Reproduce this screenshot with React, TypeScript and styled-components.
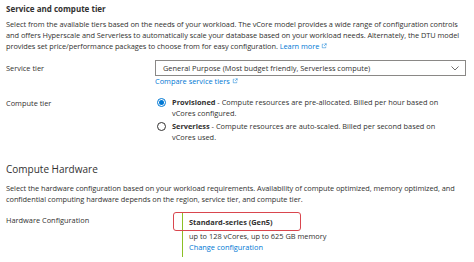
import styled, { createGlobalStyle } from 'styled-components';

const GlobalStyle = createGlobalStyle`
  html, body {
    margin: 0;
    padding: 0;
    background: #ffffff;
  }
  body {
    font-family: 'Open Sans', 'Noto Sans', sans-serif;
    color: #323130;
  }
`;

const Page = styled.div`
  width: 474px;
  height: 262px;
  overflow: hidden;
  padding: 3px 8px 0 6px;
  box-sizing: border-box;
  font-size: 7.4px;
  line-height: 11px;
`;

const SectionTitle = styled.div<{ strong?: boolean }>`
  font-size: ${({ strong }) => (strong ? '8px' : '10px')};
  font-weight: ${({ strong }) => (strong ? 700 : 400)};
  line-height: ${({ strong }) => (strong ? '11px' : '14px')};
  color: #323130;
`;

const Description = styled.p<{ gap: number }>`
  margin: ${({ gap }) => gap}px 0 0 0;
  letter-spacing: -0.05px;
  white-space: nowrap;
`;

const Link = styled.a`
  color: #0078d4;
  text-decoration: none;
`;

const External = styled.svg`
  width: 6px;
  height: 6px;
  margin-left: 2px;
  vertical-align: 0;
`;

const Spacer = styled.div<{ size: number }>`
  height: ${({ size }) => size}px;
`;

const Row = styled.div<{ top: number }>`
  display: grid;
  grid-template-columns: 149px 1fr;
  margin-top: ${({ top }) => top}px;
`;

const Label = styled.div<{ offset?: number }>`
  padding-top: ${({ offset }) => offset ?? 0}px;
`;

const Select = styled.div`
  height: 16px;
  margin-top: -2px;
  border: 1px solid #8a8886;
  box-sizing: border-box;
  display: flex;
  align-items: center;
  justify-content: space-between;
  padding: 0 6px 0 7px;
`;

const Chevron = styled.svg`
  width: 8px;
  height: 5px;
`;

const Radios = styled.div`
  display: flex;
  flex-direction: column;
  gap: 2px;
`;

const RadioRow = styled.div`
  display: grid;
  grid-template-columns: 17px 1fr;
  align-items: start;
`;

const RadioDot = styled.span<{ checked?: boolean }>`
  margin-top: 1px;
  margin-left: 2px;
  width: 9px;
  height: 9px;
  border-radius: 50%;
  border: 1px solid ${({ checked }) => (checked ? '#0078d4' : '#323130')};
  box-sizing: border-box;
  display: flex;
  align-items: center;
  justify-content: center;

  &::after {
    content: '';
    display: ${({ checked }) => (checked ? 'block' : 'none')};
    width: 5px;
    height: 5px;
    border-radius: 50%;
    background: #0078d4;
  }
`;

const Bold = styled.b`
  font-weight: 700;
`;

const Hardware = styled.div`
  position: relative;
  margin-left: 27px;
  padding: 4px 0 4px 6px;
  border-left: 1.5px solid #8cbf26;
`;

const HardwareSpec = styled.div`
  margin-top: 3px;
`;

const Highlight = styled.div`
  position: absolute;
  left: -10px;
  top: -1px;
  width: 128px;
  height: 19px;
  border: 1.5px solid #d9464e;
  border-radius: 3px;
  box-sizing: border-box;
`;

const ExternalIcon = () => (
  <External viewBox="0 0 12 12" fill="none" stroke="currentColor" strokeWidth="1">
    <path d="M5 2.5H2.5v7h7V7" />
    <path d="M7 1.5h3.5V5M10.5 1.5 6 6" />
  </External>
);

export default function App() {
  return (
    <>
      <GlobalStyle />
      <Page>
        <SectionTitle strong>Service and compute tier</SectionTitle>
        <Description gap={5}>
          Select from the available tiers based on the needs of your workload. The vCore model provides a wide range of
          configuration controls
          <br />
          and offers Hyperscale and Serverless to automatically scale your database based on your workload needs.
          Alternately, the DTU model
          <br />
          provides set price/performance packages to choose from for easy configuration.{' '}
          <Link>
            Learn more
            <ExternalIcon />
          </Link>
        </Description>

        <Row top={10}>
          <Label offset={1}>Service tier</Label>
          <div>
            <Select>
              <span>General Purpose (Most budget friendly, Serverless compute)</span>
              <Chevron viewBox="0 0 8 5" fill="none" stroke="#605e5c" strokeWidth="0.9">
                <path d="M0.5 0.5 4 4 7.5 0.5" />
              </Chevron>
            </Select>
            <Link>
              Compare service tiers
              <ExternalIcon />
            </Link>
          </div>
        </Row>

        <Row top={10}>
          <Label offset={1}>Compute tier</Label>
          <Radios>
            <RadioRow>
              <RadioDot checked />
              <span>
                <Bold>Provisioned</Bold> - Compute resources are pre-allocated. Billed per hour based on
                <br />
                vCores configured.
              </span>
            </RadioRow>
            <RadioRow>
              <RadioDot />
              <span>
                <Bold>Serverless</Bold> - Compute resources are auto-scaled. Billed per second based on
                <br />
                vCores used.
              </span>
            </RadioRow>
          </Radios>
        </Row>

        <Spacer size={19} />
        <SectionTitle>Compute Hardware</SectionTitle>
        <Description gap={7}>
          Select the hardware configuration based on your workload requirements. Availability of compute optimized,
          memory optimized, and
          <br />
          confidential computing hardware depends on the region, service tier, and compute tier.
        </Description>

        <Row top={8}>
          <Label offset={2}>Hardware Configuration</Label>
          <Hardware>
            <Highlight />
            <Bold>Standard-series (Gen5)</Bold>
            <HardwareSpec>up to 128 vCores, up to 625 GB memory</HardwareSpec>
            <Link>Change configuration</Link>
          </Hardware>
        </Row>
      </Page>
    </>
  );
}
